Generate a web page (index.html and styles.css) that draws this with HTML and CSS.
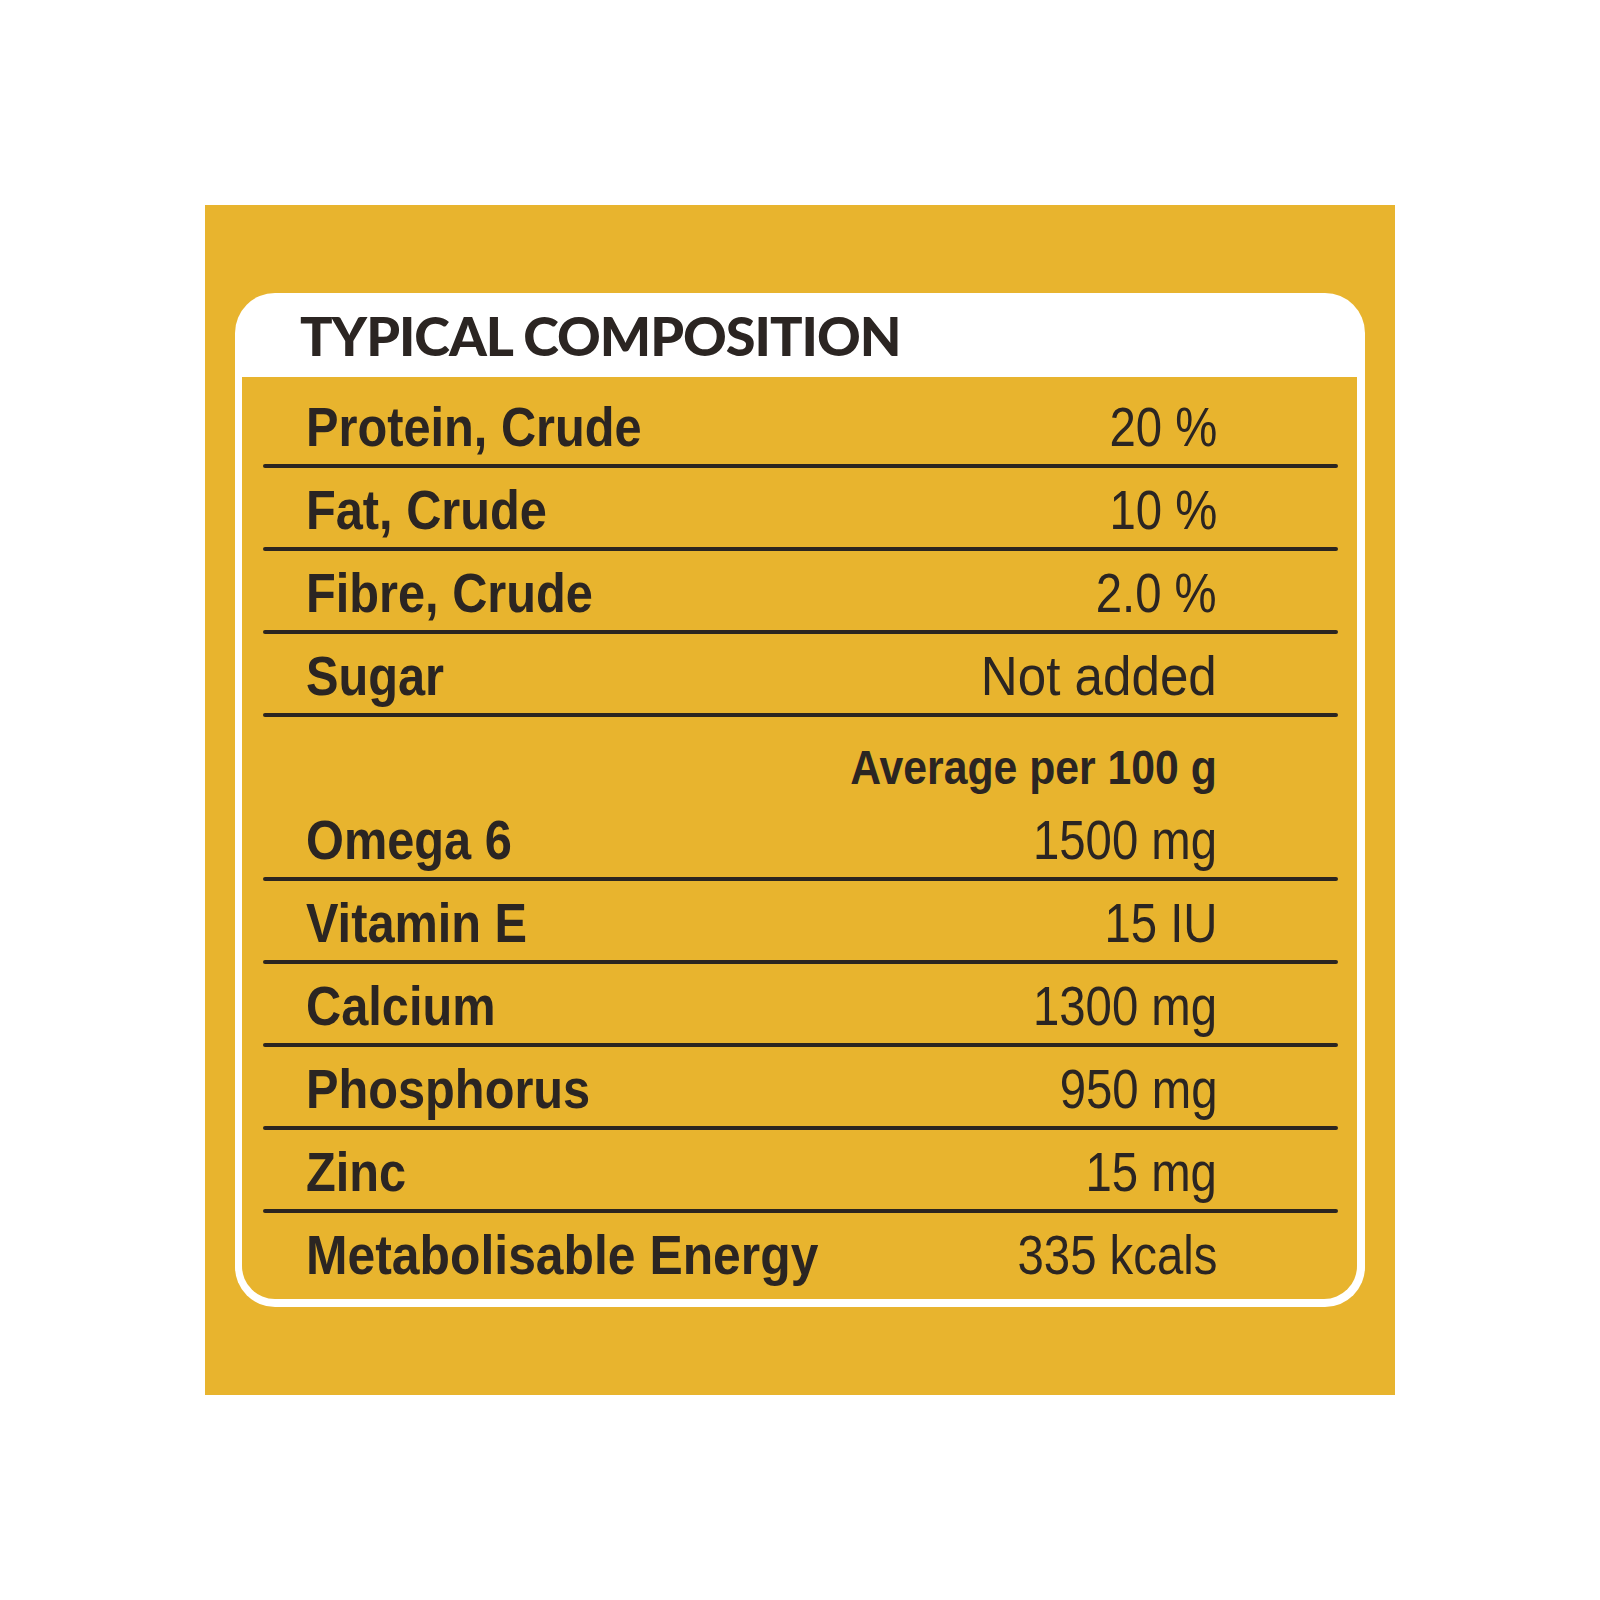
FILE: index.html
```html
<!DOCTYPE html>
<html lang="en">
<head>
<meta charset="utf-8">
<title>Typical Composition</title>
<link rel="stylesheet" href="styles.css">
</head>
<body>
<div class="page">
  <div class="square">
    <div class="card">
      <div class="card-head"><h1 class="title">TYPICAL COMPOSITION</h1></div>
      <div class="panel">
        <div class="row"><span class="label">Protein, Crude</span><span class="value">20 %</span></div>
        <div class="row"><span class="label">Fat, Crude</span><span class="value">10 %</span></div>
        <div class="row"><span class="label">Fibre, Crude</span><span class="value">2.0 %</span></div>
        <div class="row"><span class="label">Sugar</span><span class="value value-wide">Not added</span></div>
        <div class="avg"><span class="avg-text">Average per 100 g</span></div>
        <div class="row"><span class="label">Omega 6</span><span class="value">1500 mg</span></div>
        <div class="row"><span class="label">Vitamin E</span><span class="value">15 IU</span></div>
        <div class="row"><span class="label">Calcium</span><span class="value">1300 mg</span></div>
        <div class="row"><span class="label">Phosphorus</span><span class="value">950 mg</span></div>
        <div class="row"><span class="label">Zinc</span><span class="value">15 mg</span></div>
        <div class="row row-last"><span class="label label-wide">Metabolisable Energy</span><span class="value">335 kcals</span></div>
      </div>
    </div>
  </div>
</div>
</body>
</html>
```
FILE: styles.css
```css
html, body {
  margin: 0;
  padding: 0;
  background: #ffffff;
}

.page {
  padding: 205px 0 0 205px;
}

.square {
  width: 1190px;
  box-sizing: border-box;
  padding: 88px 30px;
  background: #e8b42e;
}

.card {
  background: #ffffff;
  border-radius: 40px;
  padding: 0 8px 8px 7px;
}

.card-head {
  height: 84px;
  box-sizing: border-box;
  padding: 16px 0 0 58px;
}

.title {
  margin: 0;
  font-family: Lato, "Open Sans", sans-serif;
  font-weight: 900;
  font-size: 54px;
  line-height: 54px;
  color: #2b2522;
  letter-spacing: -1px;
}

.panel {
  background: #e8b42e;
  border-radius: 0 0 33px 33px;
  padding: 8px 19px 16px 21px;
}

.row {
  display: flex;
  justify-content: space-between;
  align-items: baseline;
  padding: 14px 121px 13px 43px;
  height: 56px;
  position: relative;
}

.row::after {
  content: "";
  position: absolute;
  left: 0;
  right: 0;
  bottom: 0;
  height: 4px;
  border-radius: 2px;
  background: #2b2520;
}

.row-last {
  padding-bottom: 0;
}

.row-last::after {
  display: none;
}

.label {
  display: inline-block;
  font-family: "Liberation Sans", Arial, sans-serif;
  font-weight: 700;
  font-size: 56px;
  line-height: 56px;
  color: #2b2522;
  transform: scaleX(0.87);
  transform-origin: left center;
  white-space: nowrap;
}

.label-wide {
  transform: scaleX(0.89);
}

.value {
  display: inline-block;
  font-family: "Liberation Sans", Arial, sans-serif;
  font-weight: 400;
  font-size: 55px;
  line-height: 56px;
  color: #2b2522;
  transform: scaleX(0.86);
  transform-origin: right center;
  white-space: nowrap;
}

.value-wide {
  transform: scaleX(0.93);
}

.avg {
  display: flex;
  justify-content: flex-end;
  padding: 27px 121px 6px 43px;
}

.avg-text {
  display: inline-block;
  font-family: "Liberation Sans", Arial, sans-serif;
  font-weight: 700;
  font-size: 48px;
  line-height: 48px;
  color: #2b2522;
  transform: scaleX(0.89);
  transform-origin: right center;
  white-space: nowrap;
}
```
